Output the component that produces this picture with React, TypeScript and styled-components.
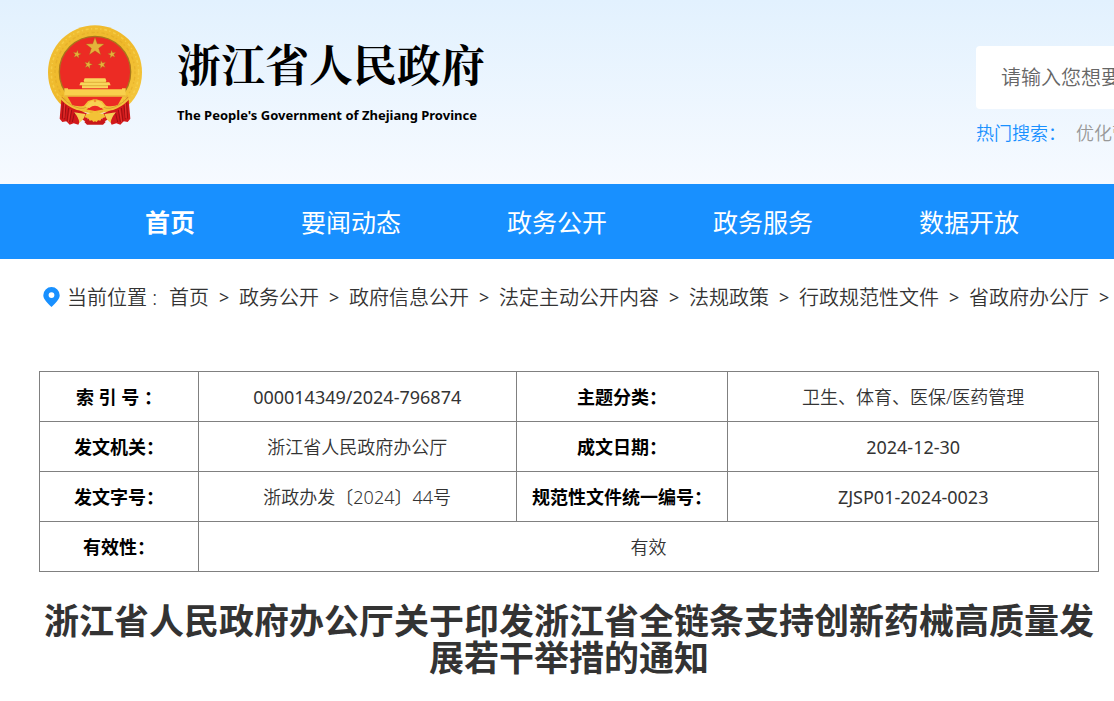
import React from "react";
import styled, { createGlobalStyle } from "styled-components";

const GlobalStyle = createGlobalStyle`
  * { box-sizing: border-box; }
  body {
    margin: 0;
    background: #fff;
    color: #333;
    font-family: "Noto Sans", "Noto Sans CJK SC", sans-serif;
    overflow-x: hidden;
  }
`;

const Header = styled.header`
  display: flex;
  align-items: flex-start;
  height: 184px;
  padding-left: 48px;
  overflow: hidden;
  background: linear-gradient(#e2f1fe, #f6faff);
`;

const Brand = styled.a`
  display: flex;
  flex: 0 0 928px;
  gap: 35px;
  padding-top: 25px;
  color: #000;
  text-decoration: none;
`;

const BrandText = styled.div`
  padding-top: 10px;
`;

const BrandName = styled.div`
  font-family: "Noto Serif CJK SC", "Noto Sans CJK SC", serif;
  font-size: 44px;
  font-weight: 700;
  line-height: 56px;
`;

const BrandEnglish = styled.div`
  margin-top: 14px;
  font-family: "Noto Sans", sans-serif;
  font-size: 13px;
  font-weight: 700;
  line-height: 20px;
`;

const Search = styled.form`
  flex: 0 0 480px;
  padding-top: 46px;
`;

const SearchInput = styled.input`
  display: block;
  width: 100%;
  height: 63px;
  padding: 0 25px;
  border: 0;
  border-radius: 4px;
  background: #fff;
  font: 350 20px "Noto Sans", "Noto Sans CJK SC", sans-serif;
  &::placeholder { color: #666; opacity: 1; }
`;

const HotSearch = styled.div`
  display: flex;
  gap: 10px;
  margin-top: 11px;
  color: #1890ff;
  font-size: 18px;
  font-weight: 350;
  line-height: 26px;
`;

const HotLink = styled.a`
  color: #999;
  text-decoration: none;
`;

const Nav = styled.nav`
  display: flex;
  height: 75px;
  padding-left: 92px;
  overflow: hidden;
  background: #1890ff;
`;

const NavLink = styled.a<{ $active?: boolean }>`
  flex: none;
  padding: 0 53px;
  color: #fff;
  font-size: 25px;
  font-weight: ${(p) => (p.$active ? 700 : 400)};
  line-height: 76px;
  text-decoration: none;
`;

const Breadcrumb = styled.nav`
  display: flex;
  align-items: center;
  height: 75px;
  padding-left: 43px;
  overflow: hidden;
  font-size: 20px;
  font-weight: 350;
  white-space: nowrap;

  > * { flex: none; }
`;

const Place = styled.span`
  margin: 0 12px 0 7px;
`;

const Crumb = styled.a`
  color: #333;
  text-decoration: none;
`;

const Separator = styled.span`
  width: 30px;
  font-size: 18px;
  font-weight: 400;
  text-align: center;
`;

const Article = styled.main`
  padding: 37px 15px 20px 39px;
`;

const InfoTable = styled.table`
  width: 100%;
  table-layout: fixed;
  border-collapse: collapse;
  font-size: 18px;
  line-height: 24px;
`;

const LabelCell = styled.th`
  height: 50px;
  padding: 0;
  border: 1px solid #808080;
  color: #000;
  font-weight: 700;
`;

const ValueCell = styled.td<{ $code?: boolean }>`
  height: 50px;
  padding: 0;
  border: 1px solid #808080;
  font-weight: ${(p) => (p.$code ? 400 : 350)};
  text-align: center;
`;

const Title = styled.h1`
  margin: 30px 0 0;
  font-size: 35px;
  font-weight: 700;
  line-height: 37px;
  text-align: center;
`;

const star = (cx: number, cy: number, r: number, turn = 0) =>
  Array.from({ length: 10 }, (_, i) => {
    const radius = i % 2 ? r * 0.4 : r;
    const angle = ((i * 36 - 90 + turn) * Math.PI) / 180;
    return `${cx + radius * Math.cos(angle)},${cy + radius * Math.sin(angle)}`;
  }).join(" ");

const Drape = () => (
  <>
    <path d="M95 260q-2 20-6 66l8 10 12-2 10 10 12-4 14 4 8-18 20 12v-26l-30-14q-30-16-44-34z" fill="#d2191b" />
    <path d="M100 278l-3 48M108 286l-4 42M116 294l-5 40M125 300l-6 36M134 306l-7 30" stroke="#9c1013" strokeWidth="3" fill="none" />
    <path d="M104 280l-2 44M121 298l-6 38" stroke="#ee4038" strokeWidth="2" fill="none" />
    <path d="M82 250q24 22 38 32 22 10 42 5l12-14 20-6v18l-14 4-12 12q-24 4-40-6-24-12-38-30z" fill="#f3c23a" />
    <path d="M96 262q22 26 54 33 14 2 20-5l12-12" stroke="#c9902a" strokeWidth="2" fill="none" />
    <path d="M132 307l34 5q-4 18-18 26-2-16-16-31z" fill="#f5cf55" />
  </>
);

const Emblem = () => (
  <svg width="94" height="101" viewBox="54 45 282 303" role="img" aria-label="国徽">
    <defs>
      <linearGradient id="gold" x1="0" y1="0" x2="1" y2="1">
        <stop offset="0" stopColor="#f0bf34" />
        <stop offset="0.5" stopColor="#efb92b" />
        <stop offset="1" stopColor="#f5c940" />
      </linearGradient>
    </defs>
    <path d="M195 46a141 141 0 0 1 141 141q0 70-56 112l-85 12-85-12q-56-42-56-112A141 141 0 0 1 195 46z" fill="url(#gold)" />
    <circle cx="195" cy="187" r="131" fill="none" stroke="#fbdc5c" strokeWidth="5" strokeDasharray="9 7 4 8" opacity="0.5" />
    <circle cx="195" cy="187" r="120" fill="none" stroke="#d9a023" strokeWidth="4" strokeDasharray="5 9 10 6" opacity="0.4" />
    <circle cx="195" cy="186" r="107" fill="#ec2b24" stroke="#a8761c" strokeWidth="4" />
    <path d="M110 255h170l-20 36-65 12-65-12z" fill="#ec2b24" />
    <g fill="#e5b23a" stroke="#a4601c" strokeWidth="1">
      <polygon points={star(195, 111, 29)} />
      <polygon points={star(141, 133, 13, 10)} />
      <polygon points={star(246, 133, 13, -10)} />
      <polygon points={star(175, 164, 13, 14)} />
      <polygon points={star(216, 164, 13, -14)} />
    </g>
    <path d="M164 205h62l3 7-2 5h11l4 9h-8v9h-78v-9h-8l4-9h11l-2-5z" fill="#f9d65c" />
    <path d="M103 235h11v3h162v-3h11v24H103z" fill="#f9d04c" />
    <path d="M160 217h70M156 227h78" stroke="#d59f2b" strokeWidth="2" fill="none" />
    <path d="M103 256h184v4H103z" fill="#eab43a" />
    <Drape />
    <g transform="translate(390 0) scale(-1 1)">
      <Drape />
    </g>
    <path d="M163 336l14-12h36l14 12-8 8h-48z" fill="#c91719" />
    <path d="M168 312l14-3 13-4 13 4 14 3 4 10-11 3-4 7-7-1-4 5-5-2-5 2-4-5-7 1-4-7-11-3z" fill="#f3c236" />
    <path d="M180 288a15 11 0 0 1 30 0v8h-30z" fill="#ec2b24" />
    <path d="M166 290l12-14 9-4 8 5 8-5 9 4 12 14-12 4q-17-14-34 0z" fill="#f8d153" />
  </svg>
);

const Pin = () => (
  <svg width="17" height="20" viewBox="0 0 17 20" aria-hidden="true">
    <path fillRule="evenodd" fill="#1890ff" d="M8.500 0a8.200 8.200 0 0 1 8.200 8.200c0 4-4 7.500-8.200 11.800C4.300 15.700.3 12.200.3 8.200A8.200 8.200 0 0 1 8.500 0zm0 5.200a2.900 2.900 0 1 0 0 5.800 2.900 2.900 0 0 0 0-5.800z" />
  </svg>
);

const navItems = ["首页", "要闻动态", "政务公开", "政务服务", "数据开放"];
const crumbs = ["首页", "政务公开", "政府信息公开", "法定主动公开内容", "法规政策", "行政规范性文件", "省政府办公厅"];
const infoRows = [
  ["索 引 号 ：", "000014349/2024-796874", "主题分类：", "卫生、体育、医保/医药管理"],
  ["发文机关：", "浙江省人民政府办公厅", "成文日期：", "2024-12-30"],
  ["发文字号：", "浙政办发〔2024〕44号", "规范性文件统一编号：", "ZJSP01-2024-0023"],
];

const isCode = (text: string) => /^[\w/-]+$/.test(text);

export default function App() {
  return (
    <>
      <GlobalStyle />
      <Header>
        <Brand href="#">
          <Emblem />
          <BrandText>
            <BrandName>浙江省人民政府</BrandName>
            <BrandEnglish>The People's Government of Zhejiang Province</BrandEnglish>
          </BrandText>
        </Brand>
        <Search>
          <SearchInput type="search" aria-label="搜索" placeholder="请输入您想要搜索的内容" />
          <HotSearch>
            <span>热门搜索：</span>
            <HotLink href="#">优化营商环境</HotLink>
          </HotSearch>
        </Search>
      </Header>
      <Nav>
        {navItems.map((item, i) => (
          <NavLink key={item} href="#" $active={i === 0}>{item}</NavLink>
        ))}
      </Nav>
      <Breadcrumb>
        <Pin />
        <Place>当前位置 :</Place>
        {crumbs.map((item) => (
          <React.Fragment key={item}>
            <Crumb href="#">{item}</Crumb>
            <Separator>&gt;</Separator>
          </React.Fragment>
        ))}
      </Breadcrumb>
      <Article>
        <InfoTable>
          <colgroup>
            <col style={{ width: "15%" }} />
            <col style={{ width: "30%" }} />
            <col style={{ width: "20%" }} />
            <col style={{ width: "35%" }} />
          </colgroup>
          <tbody>
            {infoRows.map(([label, value, label2, value2]) => (
              <tr key={label}>
                <LabelCell scope="row">{label}</LabelCell>
                <ValueCell $code={isCode(value)}>{value}</ValueCell>
                <LabelCell scope="row">{label2}</LabelCell>
                <ValueCell $code={isCode(value2)}>{value2}</ValueCell>
              </tr>
            ))}
            <tr>
              <LabelCell scope="row">有效性：</LabelCell>
              <ValueCell colSpan={3}>有效</ValueCell>
            </tr>
          </tbody>
        </InfoTable>
        <Title>浙江省人民政府办公厅关于印发浙江省全链条支持创新药械高质量发展若干举措的通知</Title>
      </Article>
    </>
  );
}
